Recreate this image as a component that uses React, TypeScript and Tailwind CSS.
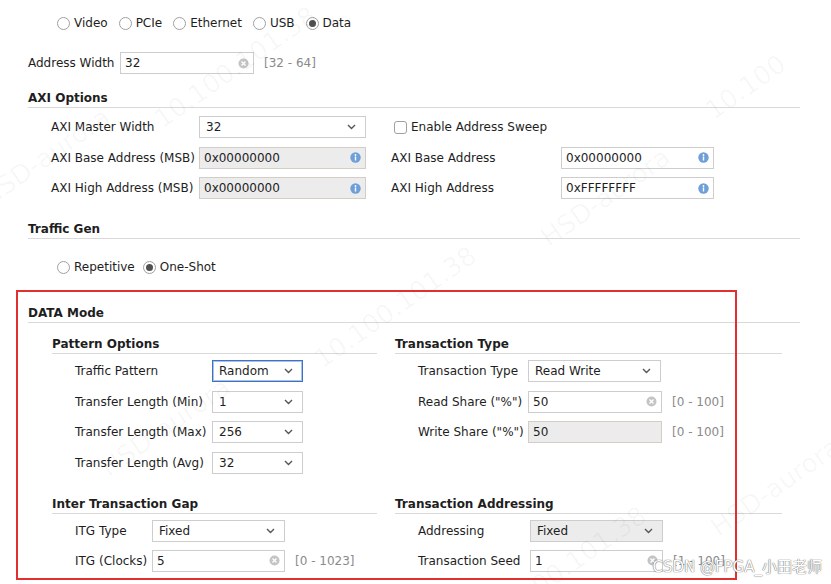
import React from 'react';

const FONT = '"DejaVu Sans", "Noto Sans CJK SC", sans-serif';

const Chevron = () => (
  <svg width="9" height="6" viewBox="0 0 9 6" className="shrink-0">
    <polyline points="1,1 4.5,4.5 8,1" fill="none" stroke="#555" strokeWidth="1.4" />
  </svg>
);

const ClearIcon = () => (
  <svg width="11" height="11" viewBox="0 0 11 11" className="shrink-0">
    <circle cx="5.5" cy="5.5" r="5" fill="#c4c4c4" />
    <path d="M3.5 3.5 L7.5 7.5 M7.5 3.5 L3.5 7.5" stroke="#fff" strokeWidth="1.3" />
  </svg>
);

const InfoIcon = () => (
  <svg width="11" height="11" viewBox="0 0 11 11" className="shrink-0">
    <circle cx="5.5" cy="5.5" r="5.2" fill="#6f9fd9" />
    <circle cx="5.5" cy="3" r="0.9" fill="#fff" />
    <rect x="4.8" y="4.5" width="1.4" height="4" fill="#fff" />
  </svg>
);

const Radio = ({ checked, label }: { checked?: boolean; label: string }) => (
  <div className="flex items-center gap-[4px]">
    <span className="w-[13px] h-[13px] rounded-full border border-[#a0a0a0] bg-white flex items-center justify-center">
      {checked && <span className="w-[7px] h-[7px] rounded-full bg-[#505050]" />}
    </span>
    <span>{label}</span>
  </div>
);

interface FieldProps {
  w: string;
  value: string;
  gray?: boolean;
  focus?: boolean;
}

const Select = ({ w, value, gray, focus }: FieldProps) => (
  <div
    className={`${w} h-[22px] flex items-center justify-between pl-[6px] pr-[9px] border ${
      focus ? 'border-[#3f72c4] shadow-[inset_0_0_0_1px_#a9c2ea]' : 'border-[#cdcdcd]'
    } ${gray ? 'bg-[#ececec]' : 'bg-white'}`}
  >
    <span>{value}</span>
    <Chevron />
  </div>
);

const Input = ({ w, value, gray, icon }: FieldProps & { icon?: 'clear' | 'info' }) => (
  <div
    className={`${w} h-[22px] flex items-center justify-between pl-[4px] pr-[4px] border ${
      gray ? 'bg-[#ececec] border-[#d3cdc6]' : 'bg-white border-[#cdcdcd]'
    }`}
  >
    <span>{value}</span>
    {icon === 'clear' && <ClearIcon />}
    {icon === 'info' && <InfoIcon />}
  </div>
);

const Range = ({ text }: { text: string }) => (
  <span className="text-[#8a8a8a] ml-[10px]">{text}</span>
);

const Header = ({ title, className = '' }: { title: string; className?: string }) => (
  <div className={`font-bold leading-[14px] pb-[2px] border-b border-[#d9d9d9] ${className}`}>{title}</div>
);

const Row = ({ label, lw, children }: { label: string; lw: string; children: React.ReactNode }) => (
  <div className="flex items-center h-[22px]">
    <span className={`${lw} shrink-0`}>{label}</span>
    {children}
  </div>
);

const Watermark = ({ className, text }: { className: string; text: string }) => (
  <div
    className={`absolute pointer-events-none whitespace-nowrap text-[26px] text-[#000]/[0.035] -rotate-[35deg] ${className}`}
  >
    {text}
  </div>
);

export default function App() {
  return (
    <div
      className="relative w-[831px] h-[584px] overflow-hidden bg-white text-[12px] text-[#1e1e1e] leading-[14px]"
      style={{ fontFamily: FONT }}
    >
      {/* protocol radios */}
      <div className="flex items-center gap-[11px] pl-[57px] pt-[16px]">
        <Radio label="Video" />
        <Radio label="PCIe" />
        <Radio label="Ethernet" />
        <Radio label="USB" />
        <Radio label="Data" checked />
      </div>

      <div className="pl-[28px] w-[800px]">
        <div className="flex items-center mt-[22px]">
          <span className="w-[92px]">Address Width</span>
          <Input w="w-[134px]" value="32" icon="clear" />
          <Range text="[32 - 64]" />
        </div>

        {/* AXI options */}
        <Header title="AXI Options" className="mt-[17px]" />
        <div className="flex flex-col gap-[8.5px] mt-[8px] pl-[23px]">
          <div className="flex items-center">
            <Row label="AXI Master Width" lw="w-[148px]">
              <Select w="w-[167px]" value="32" />
            </Row>
            <div className="flex items-center gap-[4px] ml-[28px]">
              <span className="w-[13px] h-[13px] rounded-[3px] border border-[#a0a0a0] bg-white" />
              <span>Enable Address Sweep</span>
            </div>
          </div>
          <div className="flex items-center">
            <Row label="AXI Base Address (MSB)" lw="w-[148px]">
              <Input w="w-[167px]" value="0x00000000" gray icon="info" />
            </Row>
            <Row label="AXI Base Address" lw="w-[170px] ml-[25px]">
              <Input w="w-[153px]" value="0x00000000" icon="info" />
            </Row>
          </div>
          <div className="flex items-center">
            <Row label="AXI High Address (MSB)" lw="w-[148px]">
              <Input w="w-[167px]" value="0x00000000" gray icon="info" />
            </Row>
            <Row label="AXI High Address" lw="w-[170px] ml-[25px]">
              <Input w="w-[153px]" value="0xFFFFFFFF" icon="info" />
            </Row>
          </div>
        </div>

        {/* traffic gen */}
        <Header title="Traffic Gen" className="mt-[23px]" />
        <div className="flex items-center gap-[8px] pl-[29px] mt-[21px]">
          <Radio label="Repetitive" />
          <Radio label="One-Shot" checked />
        </div>

        {/* data mode */}
        <Header title="DATA Mode" className="mt-[32px]" />
        <div className="grid grid-cols-[325px_387px] gap-x-[18px] pl-[24px] mt-[14px]">
          <div>
            <Header title="Pattern Options" />
            <div className="flex flex-col gap-[8.5px] mt-[6px] pl-[23px]">
              <Row label="Traffic Pattern" lw="w-[137px]">
                <Select w="w-[91px]" value="Random" focus />
              </Row>
              <Row label="Transfer Length (Min)" lw="w-[137px]">
                <Select w="w-[91px]" value="1" />
              </Row>
              <Row label="Transfer Length (Max)" lw="w-[137px]">
                <Select w="w-[91px]" value="256" />
              </Row>
              <Row label="Transfer Length (Avg)" lw="w-[137px]">
                <Select w="w-[91px]" value="32" />
              </Row>
            </div>
          </div>
          <div>
            <Header title="Transaction Type" />
            <div className="flex flex-col gap-[8.5px] mt-[6px] pl-[23px]">
              <Row label="Transaction Type" lw="w-[110px]">
                <Select w="w-[133px]" value="Read Write" />
              </Row>
              <Row label={'Read Share ("%")'} lw="w-[110px]">
                <Input w="w-[134px]" value="50" icon="clear" />
                <Range text="[0 - 100]" />
              </Row>
              <Row label={'Write Share ("%")'} lw="w-[110px]">
                <Input w="w-[134px]" value="50" gray />
                <Range text="[0 - 100]" />
              </Row>
            </div>
          </div>

          <div className="mt-[23px]">
            <Header title="Inter Transaction Gap" />
            <div className="flex flex-col gap-[8px] mt-[6px] pl-[23px]">
              <Row label="ITG Type" lw="w-[77px]">
                <Select w="w-[133px]" value="Fixed" />
              </Row>
              <Row label="ITG (Clocks)" lw="w-[77px]">
                <Input w="w-[133px]" value="5" icon="clear" />
                <Range text="[0 - 1023]" />
              </Row>
            </div>
          </div>
          <div className="mt-[23px]">
            <Header title="Transaction Addressing" />
            <div className="flex flex-col gap-[8px] mt-[6px] pl-[23px]">
              <Row label="Addressing" lw="w-[112px]">
                <Select w="w-[133px]" value="Fixed" gray />
              </Row>
              <Row label="Transaction Seed" lw="w-[112px]">
                <Input w="w-[133px]" value="1" icon="clear" />
                <Range text="[1 - 100]" />
              </Row>
            </div>
          </div>
        </div>
      </div>

      {/* faint diagonal watermarks */}
      <Watermark className="left-[140px] top-[60px]" text="10.100.101.38" />
      <Watermark className="-left-[30px] top-[150px]" text="HSD-aurora" />
      <Watermark className="left-[700px] top-[80px]" text="10.100" />
      <Watermark className="left-[530px] top-[190px]" text="HSD-aurora" />
      <Watermark className="left-[300px] top-[300px]" text="10.100.101.38" />
      <Watermark className="left-[90px] top-[420px]" text="HSD-aurora" />
      <Watermark className="left-[700px] top-[480px]" text="HSD-aurora" />
      <Watermark className="left-[470px] top-[560px]" text="10.100.101.38" />

      {/* red annotation box */}
      <div className="absolute left-[16px] top-[290px] w-[721px] h-[290px] border-2 border-[#e0302f] pointer-events-none" />

      {/* site watermark */}
      <div
        className="absolute right-[9px] bottom-[8px] text-[15px] leading-[18px] text-white pointer-events-none [text-shadow:0_0_1px_#666,0_0_1px_#666]"
        style={{ fontFamily: '"DejaVu Sans", "Noto Sans CJK SC", sans-serif' }}
      >
        CSDN @FPGA_小田老师
      </div>
    </div>
  );
}
